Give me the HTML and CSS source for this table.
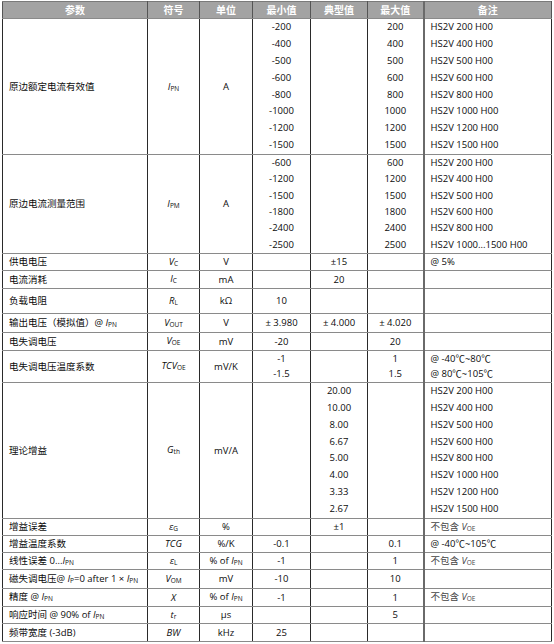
FILE: index.html
```html
<!DOCTYPE html>
<html lang="zh-CN">
<head>
<meta charset="utf-8">
<title>HS2V 参数表</title>
<link rel="stylesheet" href="styles.css">
</head>
<body>
<table class="spec">
  <colgroup>
    <col class="c-param"><col class="c-sym"><col class="c-unit"><col class="c-min"><col class="c-typ"><col class="c-max"><col class="c-note">
  </colgroup>
  <thead>
    <tr class="head">
      <th>参数</th><th>符号</th><th>单位</th><th>最小值</th><th>典型值</th><th>最大值</th><th class="note-h">备注</th>
    </tr>
  </thead>
  <tbody>
    <tr>
      <td class="param">原边额定电流有效值</td>
      <td class="sym"><i>I</i><span class="sub">PN</span></td>
      <td class="unit">A</td>
      <td class="num l8"><div>-200</div><div>-400</div><div>-500</div><div>-600</div><div>-800</div><div>-1000</div><div>-1200</div><div>-1500</div></td>
      <td class="num"></td>
      <td class="num l8"><div>200</div><div>400</div><div>500</div><div>600</div><div>800</div><div>1000</div><div>1200</div><div>1500</div></td>
      <td class="note l8"><div>HS2V 200 H00</div><div>HS2V 400 H00</div><div>HS2V 500 H00</div><div>HS2V 600 H00</div><div>HS2V 800 H00</div><div>HS2V 1000 H00</div><div>HS2V 1200 H00</div><div>HS2V 1500 H00</div></td>
    </tr>
    <tr>
      <td class="param">原边电流测量范围</td>
      <td class="sym"><i>I</i><span class="sub">PM</span></td>
      <td class="unit">A</td>
      <td class="num l6"><div>-600</div><div>-1200</div><div>-1500</div><div>-1800</div><div>-2400</div><div>-2500</div></td>
      <td class="num"></td>
      <td class="num l6"><div>600</div><div>1200</div><div>1500</div><div>1800</div><div>2400</div><div>2500</div></td>
      <td class="note l6"><div>HS2V 200 H00</div><div>HS2V 400 H00</div><div>HS2V 500 H00</div><div>HS2V 600 H00</div><div>HS2V 800 H00</div><div>HS2V 1000...1500 H00</div></td>
    </tr>
    <tr class="h17">
      <td class="param">供电电压</td>
      <td class="sym"><i>V</i><span class="sub">C</span></td>
      <td class="unit">V</td>
      <td class="num"></td><td class="num">±15</td><td class="num"></td>
      <td class="note">@ 5%</td>
    </tr>
    <tr class="h18">
      <td class="param">电流消耗</td>
      <td class="sym"><i>I</i><span class="sub">C</span></td>
      <td class="unit">mA</td>
      <td class="num"></td><td class="num">20</td><td class="num"></td>
      <td class="note"></td>
    </tr>
    <tr class="h25">
      <td class="param">负载电阻</td>
      <td class="sym"><i>R</i><span class="sub">L</span></td>
      <td class="unit">kΩ</td>
      <td class="num">10</td><td class="num"></td><td class="num"></td>
      <td class="note"></td>
    </tr>
    <tr class="h19">
      <td class="param">输出电压（模拟值）@ <i>I</i><span class="sub">PN</span></td>
      <td class="sym"><i>V</i><span class="sub">OUT</span></td>
      <td class="unit">V</td>
      <td class="num">± 3.980</td><td class="num">± 4.000</td><td class="num">± 4.020</td>
      <td class="note"></td>
    </tr>
    <tr class="h18">
      <td class="param">电失调电压</td>
      <td class="sym"><i>V</i><span class="sub">OE</span></td>
      <td class="unit">mV</td>
      <td class="num">-20</td><td class="num"></td><td class="num">20</td>
      <td class="note"></td>
    </tr>
    <tr>
      <td class="param">电失调电压温度系数</td>
      <td class="sym"><i>TCV</i><span class="sub">OE</span></td>
      <td class="unit">mV/K</td>
      <td class="num l2"><div>-1</div><div>-1.5</div></td>
      <td class="num"></td>
      <td class="num l2"><div>1</div><div>1.5</div></td>
      <td class="note l2"><div>@ -40℃~80℃</div><div>@ 80℃~105℃</div></td>
    </tr>
    <tr>
      <td class="param">理论增益</td>
      <td class="sym"><i>G</i><span class="sub">th</span></td>
      <td class="unit">mV/A</td>
      <td class="num"></td>
      <td class="num l8"><div>20.00</div><div>10.00</div><div>8.00</div><div>6.67</div><div>5.00</div><div>4.00</div><div>3.33</div><div>2.67</div></td>
      <td class="num"></td>
      <td class="note l8"><div>HS2V 200 H00</div><div>HS2V 400 H00</div><div>HS2V 500 H00</div><div>HS2V 600 H00</div><div>HS2V 800 H00</div><div>HS2V 1000 H00</div><div>HS2V 1200 H00</div><div>HS2V 1500 H00</div></td>
    </tr>
    <tr class="h17">
      <td class="param">增益误差</td>
      <td class="sym"><i>ε</i><span class="sub">G</span></td>
      <td class="unit">%</td>
      <td class="num"></td><td class="num">±1</td><td class="num"></td>
      <td class="note grey">不包含 <i>V</i><span class="sub">OE</span></td>
    </tr>
    <tr class="h17">
      <td class="param">增益温度系数</td>
      <td class="sym"><i>TCG</i></td>
      <td class="unit">%/K</td>
      <td class="num">-0.1</td><td class="num"></td><td class="num">0.1</td>
      <td class="note">@ -40℃~105℃</td>
    </tr>
    <tr class="h17">
      <td class="param">线性误差 0...<i>I</i><span class="sub">PN</span></td>
      <td class="sym"><i>ε</i><span class="sub">L</span></td>
      <td class="unit">% of <i>I</i><span class="sub">PN</span></td>
      <td class="num">-1</td><td class="num"></td><td class="num">1</td>
      <td class="note grey">不包含 <i>V</i><span class="sub">OE</span></td>
    </tr>
    <tr class="h19">
      <td class="param">磁失调电压@ <i>I</i><span class="sub">P</span>=0 after 1 × <i>I</i><span class="sub">PN</span></td>
      <td class="sym"><i>V</i><span class="sub">OM</span></td>
      <td class="unit">mV</td>
      <td class="num">-10</td><td class="num"></td><td class="num">10</td>
      <td class="note"></td>
    </tr>
    <tr class="h18">
      <td class="param">精度 @ <i>I</i><span class="sub">PN</span></td>
      <td class="sym"><i>X</i></td>
      <td class="unit">% of <i>I</i><span class="sub">PN</span></td>
      <td class="num">-1</td><td class="num"></td><td class="num">1</td>
      <td class="note grey">不包含 <i>V</i><span class="sub">OE</span></td>
    </tr>
    <tr class="h17">
      <td class="param">响应时间 @ 90% of <i>I</i><span class="sub">PN</span></td>
      <td class="sym"><i>t</i><span class="sub">r</span></td>
      <td class="unit">μs</td>
      <td class="num"></td><td class="num"></td><td class="num">5</td>
      <td class="note"></td>
    </tr>
    <tr class="h18">
      <td class="param">频带宽度 (-3dB)</td>
      <td class="sym"><i>BW</i></td>
      <td class="unit">kHz</td>
      <td class="num">25</td><td class="num"></td><td class="num"></td>
      <td class="note"></td>
    </tr>
  </tbody>
</table>
</body>
</html>
```

FILE: styles.css
```css
html, body {
  margin: 0;
  padding: 0;
  background: #ffffff;
}
body {
  padding: 1px 2px;
}
.spec {
  border-collapse: collapse;
  table-layout: fixed;
  width: 549px;
  font-family: "Open Sans", "Noto Sans CJK SC", sans-serif;
  font-size: 9.5px;
  color: #0c0c0c;
}
.c-param { width: 145px; }
.c-sym { width: 52px; }
.c-unit { width: 53px; }
.c-min { width: 58px; }
.c-typ { width: 57px; }
.c-max { width: 56px; }
.c-note { width: 128px; }

.spec th, .spec td {
  padding: 0;
  border-left: 1px solid #2a2a2a;
  border-right: 1px solid #2a2a2a;
  border-top: 1px solid #8a8a8a;
  border-bottom: 1px solid #8a8a8a;
  vertical-align: middle;
  line-height: 13px;
  white-space: nowrap;
  overflow: hidden;
}
.spec th.note-h, .spec td.note {
  border-left: 2px solid #6a6a6a;
}
.head th {
  height: 16px;
  background: #a3a3a3;
  color: #ffffff;
  font-size: 10px;
  font-weight: bold;
  text-align: center;
  border-left-color: #555555;
  border-right-color: #555555;
  border-top: 1px solid #7a7a7a;
}
.param {
  text-align: left;
  padding-left: 6px !important;
}
.sym, .unit, .num {
  text-align: center;
}
.note {
  text-align: left;
  padding-left: 6px !important;
}
.grey { color: #444444; }

.sub {
  font-size: 6.5px;
  font-style: normal;
  position: relative;
  top: 1px;
}

.l8 div { height: 16.875px; line-height: 16.875px; }
.l6 div { height: 16.33px; line-height: 16.33px; }
.l2 div { height: 15.5px; line-height: 15.5px; }

.h25 { height: 25px; }
.h19 { height: 19px; }
.h18 { height: 18px; }
.h17 { height: 17px; }
```
